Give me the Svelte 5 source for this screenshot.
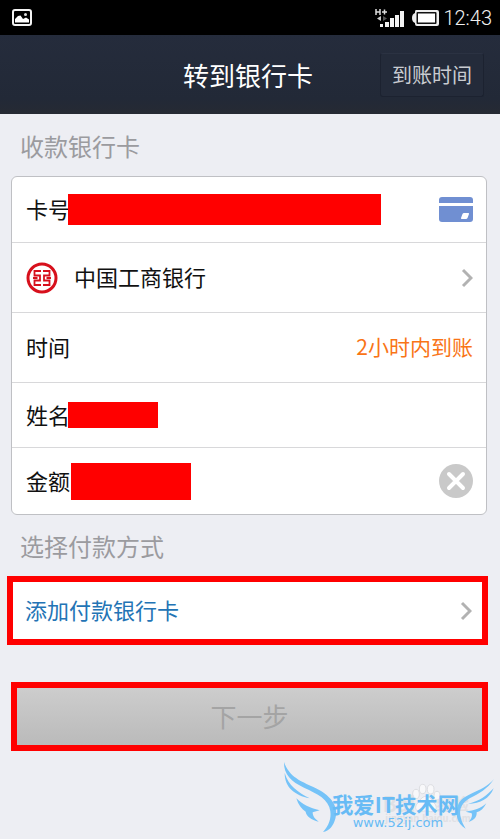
<script lang="ts">
    let cardNumber = '';
    let payeeName = '';
    let amount = '';

    function clearAmount() {
        amount = '';
    }
</script>

<div class="screen">
    <div class="status-bar">
        <svg class="picture-icon" width="20" height="17" viewBox="0 0 20 17">
            <rect x="1" y="1" width="18" height="15" rx="2" fill="none" stroke="#f4f4f4" stroke-width="2" />
            <path d="M3 13.500V10L6 7l2.500-.5L11 10l3-1.500 3 2v3z" fill="#fff" />
            <circle cx="13.500" cy="5.500" r="1.500" fill="#ddd" />
        </svg>
        <div class="status-right">
            <svg width="29" height="20" viewBox="0 0 29 20">
                <path d="M1 1v6M5 1v6M1 4h4M7 4h5M9.500 1.500v5" stroke="#ddd" stroke-width="1.500" fill="none" />
                <path d="M6 8v5L2 10.500z" fill="#ccc" />
                <path d="M8 8v5l4-2.500z" fill="#555" />
                <path d="M5 16h3v3H5zM10 14h4v5h-4zM15 10h4v9h-4zM20 7h4v12h-4zM25 3h4v16h-4z" fill="#f2f2f2" />
            </svg>
            <svg width="27" height="16" viewBox="0 0 27 16">
                <path d="M4 0h21q2 0 2 2v12q0 2-2 2H5q-2 0-2-2v-1q-3-1-3-5t3-5V2q0-2 1-2z" fill="#eee" />
                <rect x="4.500" y="2" width="20" height="12" rx="1" fill="#111" />
                <rect x="6" y="3.500" width="17" height="9" fill="#fff" />
            </svg>
            <span class="clock">12:43</span>
        </div>
    </div>

    <header class="title-bar">
        <h1>转到银行卡</h1>
        <button class="arrival-button" type="button">到账时间</button>
    </header>

    <main>
        <h2>收款银行卡</h2>

        <div class="card">
            <div class="row">
                <label for="card-number">卡号</label>
                <input id="card-number" class="number-input" type="text" bind:value={cardNumber} />
                <button class="icon-button" type="button" aria-label="选择银行卡">
                    <svg width="34" height="26" viewBox="0 0 34 26">
                        <path d="M0 6V3q0-3 3-3h28q3 0 3 3v3z" fill="#708fd2" />
                        <path d="M0 9h34v13q0 3-3 3H3q-3 0-3-3z" fill="#708fd2" />
                        <path d="M25 16h4q1.500 0 1 1l-1.500 4q-.5 1-1.500 1h-4q-1.500 0-1-1l1.500-4q.5-1 1.500-1z" fill="#fff" />
                    </svg>
                </button>
            </div>

            <button class="row bank-row" type="button">
                <svg width="32" height="32" viewBox="0 0 32 32">
                    <circle cx="16" cy="16" r="14" fill="#fff" stroke="#d7101c" stroke-width="3" />
                    <path
                        d="M15 9H8.500v4.500H14v5H8.500V23H15M7 16h4.500M17 9h6.500v4.500H18v5h5.500V23H17M25 16h-4.500"
                        fill="none"
                        stroke="#d7101c"
                        stroke-width="1.800"
                    />
                </svg>
                <span class="text bank-name">中国工商银行</span>
                <svg class="chevron" width="12" height="20" viewBox="0 0 12 20">
                    <path d="M2 2l8 8-8 8" fill="none" stroke="#b2b2b2" stroke-width="3" />
                </svg>
            </button>

            <div class="row time-row">
                <span class="text">时间</span>
                <span class="text arrival-time">2小时内到账</span>
            </div>

            <div class="row name-row">
                <label for="payee-name">姓名</label>
                <input id="payee-name" class="name-input" type="text" bind:value={payeeName} />
            </div>

            <div class="row">
                <label for="amount">金额</label>
                <input id="amount" class="amount-input" type="text" inputmode="decimal" bind:value={amount} />
                <button class="icon-button" type="button" aria-label="清除金额" on:click={clearAmount}>
                    <svg width="34" height="34" viewBox="0 0 34 34">
                        <circle cx="17" cy="17" r="17" fill="#c9c9c9" />
                        <path d="M10 10l14 14M24 10L10 24" stroke="#fff" stroke-width="4" stroke-linecap="round" />
                    </svg>
                </button>
            </div>
        </div>

        <h2>选择付款方式</h2>

        <button class="add-card" type="button">
            <span class="text">添加付款银行卡</span>
            <svg class="chevron" width="12" height="20" viewBox="0 0 12 20">
                <path d="M2 2l8 8-8 8" fill="none" stroke="#b2b2b2" stroke-width="3" />
            </svg>
        </button>

        <button class="next-button" type="button" disabled>下一步</button>
    </main>

    <footer>
        <svg width="220" height="79" viewBox="0 0 660 237">
            <!-- paw mark behind the site name -->
            <g fill="#f8f8fa" stroke="#dddee2" stroke-width="3">
                <ellipse cx="408" cy="105" rx="10" ry="14" />
                <ellipse cx="428" cy="90" rx="10" ry="14" />
                <ellipse cx="452" cy="91" rx="10" ry="14" />
                <ellipse cx="471" cy="110" rx="9" ry="13" />
                <path d="M438 112c14 0 18 14 28 24 8 14-3 24-14 22-12-3-18-3-28 0-14 2-22-10-14-22 9-9 14-24 28-24z" />
                <text class="faint" x="308" y="158" font-size="62">Bai</text>
                <text class="faint" x="470" y="154" font-size="48">经验</text>
                <text class="faint" x="316" y="190" font-size="28">jingyan.baidu.com</text>
            </g>
            <g fill="#75c3f8">
                <path d="M12 9C28 55 64 67 100 84C150 106 178 141 166 179C160 201 148 215 129 219C147 200 154 178 151 157C146 120 113 105 72 86C34 68 11 47 12 9z" />
                <path d="M14 42C26 80 52 99 89 118C45 109 14 86 14 42z" />
                <path d="M49 118C69 137 88 147 119 154L98 160C98 172 105 180 116 188C94 182 79 172 77 158C64 150 55 137 49 118z" />
                <path d="M642 60C622 91 597 103 569 118C538 137 530 163 557 209C530 193 525 166 534 139C547 101 602 105 642 60z" />
                <path d="M641 88C628 120 602 133 564 135C603 124 617 112 641 88z" />
                <path d="M619 133C611 149 601 158 590 160C591 174 582 184 567 188C576 178 577 168 575 163L557 158C584 154 600 150 619 133z" />
            </g>
            <g fill="#67bbf5">
                <text class="site-name" x="156" y="162" font-size="64">我爱IT技术网</text>
                <text class="site-url" x="218" y="205" font-size="39">www.52ij.com</text>
            </g>
        </svg>
    </footer>
</div>

<style>
    :global(body) {
        margin: 0;
        background: #edeef3;
    }

    .screen {
        min-height: 100vh;
        background: #edeef3;
        color: #111;
        font-family: 'Noto Sans CJK SC', 'Noto Sans', sans-serif;
        font-size: 22px;
        line-height: 32px;
    }

    button,
    input {
        box-sizing: border-box;
        margin: 0;
        padding: 0;
        border: none;
        border-radius: 0;
        font: inherit;
        color: inherit;
        background: none;
    }

    svg {
        display: block;
        flex-shrink: 0;
    }

    h1,
    h2 {
        margin: 0;
        font-weight: 400;
    }

    .status-bar {
        display: flex;
        align-items: center;
        justify-content: space-between;
        height: 35px;
        padding: 0 8px 0 12px;
        background: #000;
    }

    .status-right {
        display: flex;
        align-items: center;
        gap: 8px;
    }

    .clock {
        margin-left: -4px;
        font-family: Roboto, sans-serif;
        font-size: 20px;
        font-weight: 300;
        color: #f0f0f0;
    }

    .title-bar {
        display: grid;
        grid-template-columns: 1fr auto 1fr;
        align-items: center;
        box-sizing: border-box;
        height: 79px;
        padding: 0 16px 0 12px;
        background: linear-gradient(#252c3c, #222937 80%, #262a33);
    }

    h1 {
        grid-column: 2;
        font-size: 26px;
        color: #fff;
    }

    .arrival-button {
        justify-self: end;
        height: 44px;
        padding: 0 11px;
        border: 1px solid #1c2230;
        border-top-color: #2b3242;
        border-radius: 3px;
        background: #242b3a;
        font-size: 20px;
        color: #c9ccd1;
    }

    main {
        padding-top: 1px;
    }

    h2 {
        padding: 15px 20px 14px;
        font-size: 24px;
        color: #9b9b9f;
    }

    .card {
        margin: 0 13px 0 11px;
        border: 1px solid #bfc0c4;
        border-radius: 6px;
        background: #fff;
        overflow: hidden;
    }

    .row {
        display: flex;
        align-items: center;
        box-sizing: border-box;
        width: 100%;
        height: 66px;
        padding: 0 13px 0 14px;
        border-bottom: 1px solid #d8d8da;
        text-align: left;
    }

    .row:last-child {
        border-bottom: none;
    }

    .bank-row,
    .time-row {
        height: 70px;
    }

    .name-row {
        height: 65px;
    }

    .text,
    .row label {
        padding-bottom: 3px;
    }

    .row input {
        min-width: 0;
        background: #f00;
        color: #fff;
    }

    .row .number-input {
        flex: 0 1 313px;
        height: 31px;
        margin-right: 16px;
    }

    .row .name-input {
        flex: 0 1 90px;
        height: 26px;
    }

    .row .amount-input {
        flex: 0 1 120px;
        height: 37px;
        margin-left: 3px;
    }

    .row label {
        flex-shrink: 0;
        margin-right: -2px;
    }

    .icon-button {
        margin-left: auto;
    }

    .bank-name {
        margin-left: 16px;
    }

    .chevron {
        margin-left: auto;
    }

    .arrival-time {
        margin-left: auto;
        font-size: 21px;
        color: #f97416;
    }

    .add-card {
        display: flex;
        align-items: center;
        width: calc(100% - 19px);
        height: 69px;
        margin: 0 12px 0 7px;
        padding: 0 10px 0 12px;
        border: 6px solid #f00;
        background: #fff;
        color: #2374b5;
    }

    .next-button {
        display: block;
        width: calc(100% - 23px);
        height: 69px;
        margin: 37px 12px 0 11px;
        padding-bottom: 2px;
        border: 6px solid #f00;
        background: linear-gradient(#cdcdcd, #bababa);
        font-size: 26px;
        color: #a4a4a4;
    }

    footer {
        display: flex;
        justify-content: flex-end;
        margin-top: 8px;
    }

    .faint {
        stroke: none;
        fill: #dfe0e4;
        font-weight: 700;
    }

    .site-name {
        font-weight: 700;
    }

    .site-url {
        font-family: 'DejaVu Sans', sans-serif;
    }
</style>
